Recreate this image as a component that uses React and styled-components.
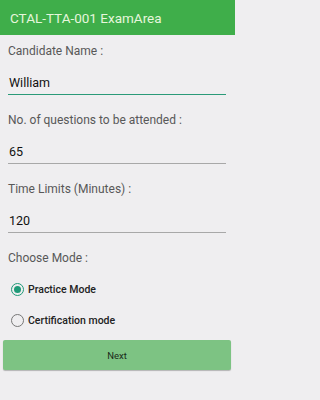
import React, { useState } from 'react'
import styled, { createGlobalStyle } from 'styled-components'

const GlobalStyle = createGlobalStyle`
    html, body {
        margin: 0;
        padding: 0;
        background: #efeef0;
    }
    * {
        box-sizing: border-box;
    }
`

const Screen = styled.div`
    width: 235px;
    height: 400px;
    background: #efeef0;
    font-family: Roboto, "Liberation Sans", sans-serif;
    display: flex;
    flex-direction: column;
    overflow: hidden;
`

const AppBar = styled.div`
    height: 35px;
    background: #3fae4a;
    display: flex;
    align-items: center;
    padding-left: 10px;
    color: #e6f6dc;
    font-size: 13.5px;
`

const Form = styled.div`
    display: flex;
    flex-direction: column;
    padding: 8px 9px 0 8px;
`

const Label = styled.div`
    font-size: 12px;
    color: #585858;
    height: 16px;
    line-height: 16px;
`

const Field = styled.div`
    margin: 16px 0 17px 0;
    padding: 0 0 0 1px;
    font-size: 12.5px;
    color: #111;
    line-height: 16px;
    height: 20px;
    border-bottom: ${p => p.active ? '1.5px solid #2a9a78' : '1px solid #a8a8a8'};
`

const ModeList = styled.div`
    display: flex;
    flex-direction: column;
    gap: 13px;
    margin-top: 14px;
`

const Option = styled.label`
    display: flex;
    align-items: center;
    gap: 4px;
    height: 18px;
    font-size: 10.5px;
    font-weight: 500;
    color: #222;
    padding-left: 3px;
`

const Radio = styled.span`
    width: 13px;
    height: 13px;
    border-radius: 50%;
    border: 1.5px solid ${p => p.checked ? '#1f9a78' : '#777'};
    display: flex;
    align-items: center;
    justify-content: center;

    &::after {
        content: '';
        width: 7px;
        height: 7px;
        border-radius: 50%;
        background: ${p => p.checked ? '#1f9a78' : 'transparent'};
    }
`

const NextButton = styled.div`
    margin: 11px 4px 0 3px;
    height: 30px;
    background: #7dc383;
    border-radius: 2px;
    box-shadow: 0 1px 1px rgba(0, 0, 0, 0.25);
    display: flex;
    align-items: center;
    justify-content: center;
    font-size: 9.5px;
    color: #1a2a1a;
`

function App() {
    const [mode, setMode] = useState('practice')

    return (
        <Screen>
            <GlobalStyle />
            <AppBar>CTAL-TTA-001 ExamArea</AppBar>
            <Form>
                <Label>Candidate Name :</Label>
                <Field active>William</Field>
                <Label>No. of questions to be attended :</Label>
                <Field>65</Field>
                <Label>Time Limits (Minutes) :</Label>
                <Field>120</Field>
                <Label>Choose Mode :</Label>
                <ModeList>
                    <Option onClick={() => setMode('practice')}>
                        <Radio checked={mode === 'practice'} />
                        Practice Mode
                    </Option>
                    <Option onClick={() => setMode('cert')}>
                        <Radio checked={mode === 'cert'} />
                        Certification mode
                    </Option>
                </ModeList>
            </Form>
            <NextButton>Next</NextButton>
        </Screen>
    )
}

export default App
